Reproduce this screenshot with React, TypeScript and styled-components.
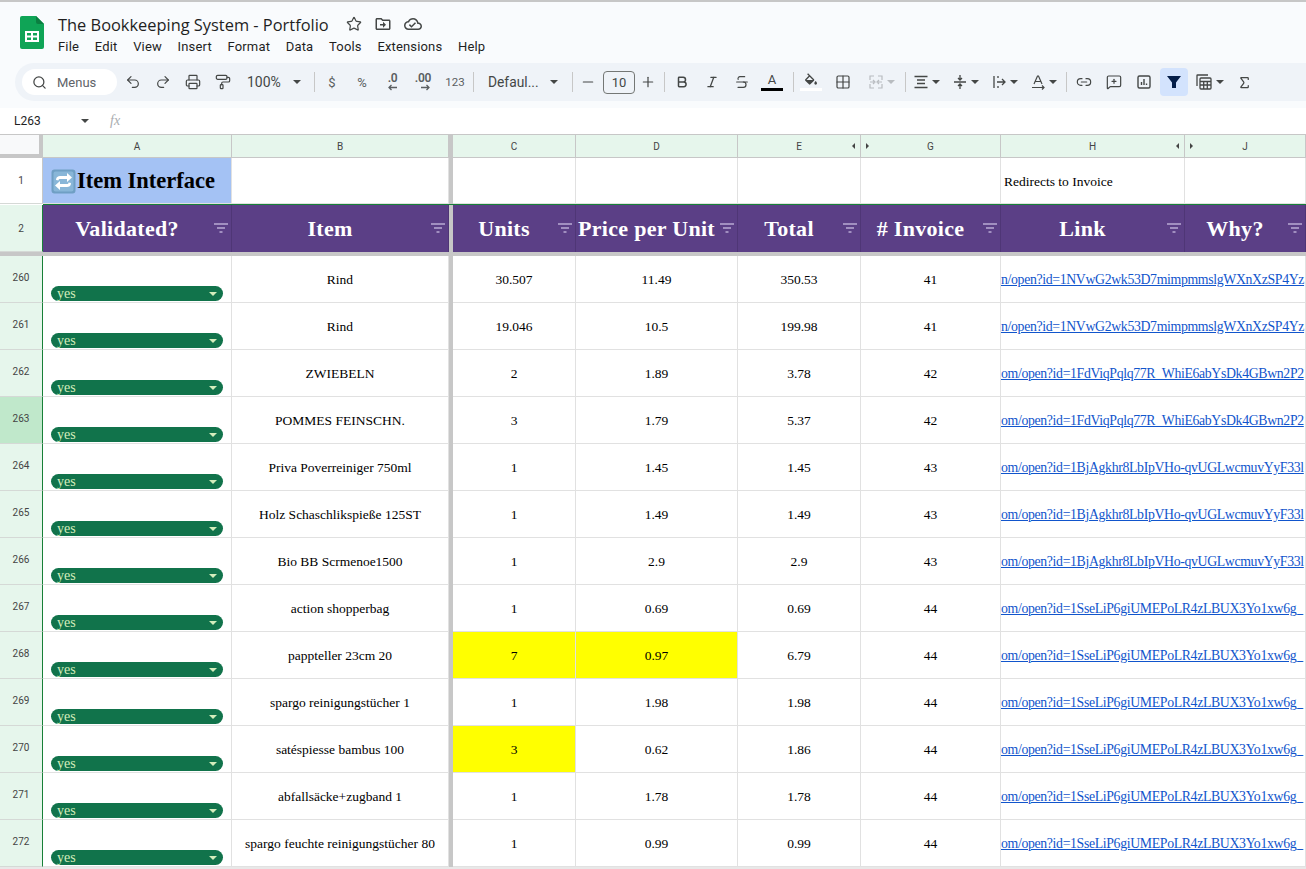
import React, { FunctionComponent, ReactNode } from "react";
import styled, { createGlobalStyle } from "styled-components";
import {
  Search,
  Undo2,
  Redo2,
  Printer,
  PaintRoller,
  Star,
  Minus,
  Plus,
  Bold,
  Italic,
  Strikethrough,
  Grid2x2,
  Link2,
  MessageSquarePlus,
  Sigma,
} from "lucide-react";

type RowData = {
  num: number;
  item: string;
  units: string;
  price: string;
  total: string;
  invoice: string;
  link: string;
  yellowUnits?: boolean;
  yellowPrice?: boolean;
};

const LINK_A = "n/open?id=1NVwG2wk53D7mimpmmslgWXnXzSP4Yz";
const LINK_B = "om/open?id=1FdViqPqlq77R_WhiE6abYsDk4GBwn2P2";
const LINK_C = "om/open?id=1BjAgkhr8LbIpVHo-qvUGLwcmuvYyF33l";
const LINK_D = "om/open?id=1SseLiP6giUMEPoLR4zLBUX3Yo1xw6g_";

const rows: RowData[] = [
  { num: 260, item: "Rind", units: "30.507", price: "11.49", total: "350.53", invoice: "41", link: LINK_A },
  { num: 261, item: "Rind", units: "19.046", price: "10.5", total: "199.98", invoice: "41", link: LINK_A },
  { num: 262, item: "ZWIEBELN", units: "2", price: "1.89", total: "3.78", invoice: "42", link: LINK_B },
  { num: 263, item: "POMMES FEINSCHN.", units: "3", price: "1.79", total: "5.37", invoice: "42", link: LINK_B },
  { num: 264, item: "Priva Poverreiniger 750ml", units: "1", price: "1.45", total: "1.45", invoice: "43", link: LINK_C },
  { num: 265, item: "Holz Schaschlikspieße 125ST", units: "1", price: "1.49", total: "1.49", invoice: "43", link: LINK_C },
  { num: 266, item: "Bio BB Scrmenoe1500", units: "1", price: "2.9", total: "2.9", invoice: "43", link: LINK_C },
  { num: 267, item: "action shopperbag", units: "1", price: "0.69", total: "0.69", invoice: "44", link: LINK_D },
  { num: 268, item: "pappteller 23cm 20", units: "7", price: "0.97", total: "6.79", invoice: "44", link: LINK_D, yellowUnits: true, yellowPrice: true },
  { num: 269, item: "spargo reinigungstücher 1", units: "1", price: "1.98", total: "1.98", invoice: "44", link: LINK_D },
  { num: 270, item: "satéspiesse bambus 100", units: "3", price: "0.62", total: "1.86", invoice: "44", link: LINK_D, yellowUnits: true },
  { num: 271, item: "abfallsäcke+zugband 1", units: "1", price: "1.78", total: "1.78", invoice: "44", link: LINK_D },
  { num: 272, item: "spargo feuchte reinigungstücher 80", units: "1", price: "0.99", total: "0.99", invoice: "44", link: LINK_D },
];

const menus = ["File", "Edit", "View", "Insert", "Format", "Data", "Tools", "Extensions", "Help"];

const GRID = "43px 189px 217px 4px 123px 162px 123px 140px 184px 121px";
const UI_FONT = `Roboto, "Liberation Sans", Arial, sans-serif`;
const CELL_FONT = `"Liberation Serif", "Times New Roman", serif`;

const GlobalStyle = createGlobalStyle`
  html, body {
    margin: 0;
    padding: 0;
    height: 100%;
    overflow: hidden;
    background: #fff;
  }
`;

const Page = styled.div`
  width: 1306px;
  height: 869px;
  overflow: hidden;
  display: flex;
  flex-direction: column;
  font-family: ${UI_FONT};
  border-top: 2px solid #c7c7c7;
  box-sizing: border-box;
`;

const Chrome = styled.header`
  height: 106px;
  flex: none;
  background: #f9fbfd;
  display: flex;
  flex-direction: column;
`;

const TitleArea = styled.div`
  display: flex;
  height: 61px;
  flex: none;
`;

const LogoSlot = styled.div`
  width: 58px;
  flex: none;
  padding: 14px 0 0 20px;
  box-sizing: border-box;
`;

const TitleColumn = styled.div`
  display: flex;
  flex-direction: column;
  padding-top: 11px;
`;

const TitleRow = styled.div`
  display: flex;
  align-items: center;
  height: 22px;
`;

const DocTitle = styled.div`
  font-family: "Open Sans", ${UI_FONT};
  font-size: 16.4px;
  color: #1f1f1f;
  width: 288px;
  white-space: nowrap;
`;

const TitleIcons = styled.div`
  display: flex;
  align-items: center;
  gap: 12px;
  color: #444746;
`;

const MenuBar = styled.nav`
  display: flex;
  margin-top: 3px;
  gap: 15.75px;
`;

const MenuItem = styled.span`
  font-size: 13px;
  letter-spacing: 0.15px;
  line-height: 18px;
  color: #1f1f1f;
`;

const Toolbar = styled.div`
  margin-left: 15px;
  width: 1291px;
  height: 38px;
  background: #eff3f8;
  border-radius: 19px 0 0 19px;
  display: flex;
  align-items: center;
  gap: 2px;
  padding-left: 7px;
  box-sizing: border-box;
  color: #444746;
`;

const SearchPill = styled.div`
  width: 95px;
  height: 26px;
  border-radius: 13px;
  background: #fff;
  display: flex;
  align-items: center;
  gap: 10px;
  padding-left: 10px;
  box-sizing: border-box;
  font-size: 13px;
  color: #5f6368;
`;

const ToolButton = styled.div<{ $w?: number; $active?: boolean }>`
  width: ${(p) => p.$w ?? 28}px;
  height: 28px;
  flex: none;
  border-radius: 4px;
  display: flex;
  align-items: center;
  justify-content: center;
  gap: 3px;
  font-size: 13px;
  background: ${(p) => (p.$active ? "#d3e3fd" : "transparent")};
  color: ${(p) => (p.$active ? "#041e49" : "#444746")};
`;

const TextTool = styled(ToolButton)<{ $size?: number }>`
  font-size: ${(p) => p.$size ?? 13}px;
  color: #5a5e61;
`;

const SelectTool = styled(ToolButton)<{ $pad: number }>`
  justify-content: flex-start;
  padding-left: ${(p) => p.$pad}px;
  box-sizing: border-box;
`;

const ZoomLabel = styled.span`
  font-size: 14px;
  width: 43px;
`;

const FontLabel = styled.span`
  font-size: 13.8px;
  width: 59px;
`;

const Caret = styled.span<{ $muted?: boolean }>`
  width: 0;
  height: 0;
  flex: none;
  border-left: 4px solid transparent;
  border-right: 4px solid transparent;
  border-top: 4px solid ${(p) => (p.$muted ? "#b8bcc0" : "#444746")};
`;

const Sep = styled.span<{ $l?: number; $r?: number }>`
  width: 1px;
  height: 20px;
  flex: none;
  background: #c7c7c7;
  margin: 0 ${(p) => p.$r ?? 1}px 0 ${(p) => p.$l ?? 5}px;
`;

const SizeBox = styled.div`
  width: 32px;
  height: 23px;
  flex: none;
  border: 1px solid #747775;
  border-radius: 4px;
  box-sizing: border-box;
  display: flex;
  align-items: center;
  justify-content: center;
  font-size: 13px;
  color: #444746;
`;

const ColorStack = styled.div`
  display: flex;
  flex-direction: column;
  align-items: center;
  line-height: 14px;
  font-size: 13px;
`;

const ColorBar = styled.span<{ $color: string }>`
  display: block;
  width: 22px;
  height: 3px;
  margin-top: 1px;
  background: ${(p) => p.$color};
`;

const DecimalStack = styled.div`
  display: flex;
  flex-direction: column;
  align-items: flex-end;
  font-size: 12px;
  font-weight: 600;
  line-height: 11px;
  letter-spacing: -0.2px;
  color: #5a5e61;
`;

const FormulaBar = styled.div`
  height: 26px;
  flex: none;
  background: #fff;
  display: flex;
  align-items: center;
  font-size: 12px;
  color: #1f1f1f;
`;

const NameBox = styled.div`
  width: 110px;
  padding-left: 14px;
  box-sizing: border-box;
  display: flex;
  align-items: center;
  justify-content: space-between;
  padding-right: 21px;
`;

const FxLabel = styled.span`
  font-family: ${CELL_FONT};
  font-style: italic;
  font-size: 14px;
  color: #a9acaf;
`;

const Grid = styled.div`
  border-top: 1px solid #c7c7c7;
  flex: 1;
  overflow: hidden;
`;

const SheetRow = styled.div<{ $h: number }>`
  display: grid;
  grid-template-columns: ${GRID};
  height: ${(p) => p.$h}px;
`;

const Corner = styled.div`
  background: #f8f9fa;
  border-right: 4px solid #c7c7c7;
  border-bottom: 4px solid #c7c7c7;
  box-sizing: border-box;
`;

const ColHead = styled.div`
  position: relative;
  background: #e6f6ec;
  border-right: 1px solid #c7c7c7;
  border-bottom: 1px solid #c7c7c7;
  box-sizing: border-box;
  display: flex;
  align-items: center;
  justify-content: center;
  font-size: 10px;
  color: #444;
`;

const RowNum = styled.div<{ $selected?: boolean }>`
  background: ${(p) => (p.$selected ? "#c0e8cb" : "#e6f6ec")};
  border-right: 1px solid #188038;
  border-bottom: 1px solid #d5d9d6;
  box-sizing: border-box;
  display: flex;
  align-items: center;
  justify-content: center;
  padding-bottom: 3px;
  font-size: 10px;
  color: #444;
`;

const FrozenRowNum = styled(RowNum)`
  padding-bottom: 0;
`;

const FirstRowNum = styled(FrozenRowNum)`
  background: #fff;
  border-right-color: #c7c7c7;
`;

const FreezeBar = styled.div`
  background: #c7c7c7;
`;

const Cell = styled.div<{ $yellow?: boolean }>`
  background: ${(p) => (p.$yellow ? "#ffff00" : "#fff")};
  border-right: 1px solid #e1e1e1;
  border-bottom: 1px solid #e1e1e1;
  box-sizing: border-box;
  display: flex;
  align-items: center;
  justify-content: center;
  padding-top: 1px;
  font-family: ${CELL_FONT};
  font-size: 13.5px;
  color: #000;
  white-space: nowrap;
  overflow: hidden;
`;

const NumberCell = styled(Cell)`
  padding-top: 2px;
`;

const TitleCell = styled(Cell)`
  justify-content: flex-start;
  padding-left: 8px;
  gap: 1px;
  background: #a4c2f4;
  font-size: 22.5px;
  font-weight: 700;
`;

const NoteCell = styled(Cell)`
  justify-content: flex-start;
  padding-left: 3px;
  padding-top: 2px;
  font-size: 13.5px;
`;

const HeadCell = styled.div`
  position: relative;
  background: #5b3f86;
  border-right: 1px solid #4f3676;
  box-sizing: border-box;
  display: flex;
  align-items: center;
  justify-content: center;
  padding-right: 20px;
  font-family: ${CELL_FONT};
  font-weight: 700;
  font-size: 22px;
  letter-spacing: 0.3px;
  color: #fff;
  white-space: nowrap;
`;

const FilterMark = styled.svg`
  position: absolute;
  right: 3px;
  top: 18px;
`;

const ChipCell = styled(Cell)`
  align-items: flex-end;
  padding: 0 8px 1px;
`;

const Chip = styled.div`
  width: 172px;
  height: 15px;
  flex: none;
  border-radius: 8px;
  background: #11734b;
  color: #d4edbc;
  display: flex;
  align-items: center;
  justify-content: space-between;
  padding: 0 6px;
  box-sizing: border-box;
  font-size: 14px;
`;

const ChipCaret = styled.span`
  width: 0;
  height: 0;
  border-left: 4px solid transparent;
  border-right: 4px solid transparent;
  border-top: 4px solid #d4edbc;
`;

const LinkCell = styled(Cell)`
  grid-column: span 2;
  justify-content: flex-start;
  padding-top: 2px;
  a {
    color: #1155cc;
    text-decoration: underline;
    font-size: 13.8px;
    letter-spacing: -0.35px;
  }
`;

const HideArrow = styled.span<{ $side: "left" | "right" }>`
  position: absolute;
  top: 8px;
  ${(p) => (p.$side === "left" ? "right: 5px;" : "left: 5px;")}
  width: 0;
  height: 0;
  border-top: 3px solid transparent;
  border-bottom: 3px solid transparent;
  ${(p) =>
    p.$side === "left"
      ? "border-right: 3px solid #444;"
      : "border-left: 3px solid #444;"}
`;

const GreenLine = styled.div`
  height: 1px;
  margin-left: 43px;
  background: #188038;
`;

const FreezeLine = styled.div`
  height: 4px;
  background: #c7c7c7;
`;

const ScrollEdge = styled.div`
  height: 2px;
  background: #e8e8e8;
`;

const SheetsLogo: FunctionComponent = () => (
  <svg width="24" height="33" viewBox="0 0 24 33">
    <path d="M2 0h14l8 8v23a2 2 0 0 1-2 2H2a2 2 0 0 1-2-2V2a2 2 0 0 1 2-2z" fill="#0fa456" />
    <path d="M16 0l8 8h-6a2 2 0 0 1-2-2z" fill="#0b7f41" />
    <path d="M5 15h14v11H5z M7 17v2.5h4V17z M13 17v2.5h4V17z M7 21.5v2.5h4v-2.5z M13 21.5v2.5h4v-2.5z" fill="#fff" fillRule="evenodd" />
  </svg>
);

const FolderMoveIcon: FunctionComponent = () => (
  <svg width="18" height="18" viewBox="0 0 24 24" fill="currentColor">
    <path d="M20 6h-8l-2-2H4c-1.1 0-2 .9-2 2v12c0 1.1.9 2 2 2h16c1.1 0 2-.9 2-2V8c0-1.1-.9-2-2-2zm0 12H4V6h5.17l2 2H20v10zm-8-4H8v-2h4V9l4 4-4 4v-3z" />
  </svg>
);

const CloudDoneIcon: FunctionComponent = () => (
  <svg width="18" height="18" viewBox="0 0 24 24" fill="currentColor">
    <path d="M19.35 10.04C18.67 6.59 15.64 4 12 4 9.11 4 6.6 5.64 5.35 8.04 2.34 8.36 0 10.91 0 14c0 3.31 2.69 6 6 6h13c2.76 0 5-2.24 5-5 0-2.64-2.05-4.78-4.65-4.96zM19 18H6c-2.21 0-4-1.79-4-4 0-2.05 1.53-3.76 3.56-3.97l1.07-.11.5-.95C8.08 7.14 9.94 6 12 6c2.62 0 4.88 1.86 5.39 4.43l.3 1.5 1.53.11c1.56.1 2.78 1.41 2.78 2.96 0 1.65-1.35 3-3 3zm-9-3.82l-2.09-2.09L6.5 13.5 10 17l6.01-6.01-1.41-1.41z" />
  </svg>
);

const RefreshEmoji: FunctionComponent = () => (
  <svg width="25" height="25" viewBox="0 0 25 25">
    <rect x="0.5" y="0.5" width="24" height="24" rx="3" fill="#6f9fc4" />
    <rect x="2.5" y="2.5" width="20" height="20" rx="2" fill="#88b6d8" />
    <path d="M5 11c0-3 2-4 4-4h7V4l5 4.5-5 4.5v-3H9c-1 0-1.5.5-1.5 1.5z" fill="#fff" />
    <path d="M20 14c0 3-2 4-4 4H9v3l-5-4.5L9 12v3h7c1 0 1.5-.5 1.5-1.5z" fill="#fff" />
  </svg>
);

const FilterIcon: FunctionComponent = () => (
  <FilterMark width="14" height="10" viewBox="0 0 14 10">
    <path d="M0 0h14v2H0zM3 4h8v2H3zM5.5 8h3v2h-3z" fill="#a18fc0" />
  </FilterMark>
);

const Funnel: FunctionComponent = () => (
  <svg width="18" height="18" viewBox="0 0 18 18">
    <path d="M2 3h14l-5 6.5V15H7V9.5z" fill="currentColor" />
  </svg>
);

const FillIcon: FunctionComponent = () => (
  <svg width="16" height="14" viewBox="0 0 24 20" fill="currentColor">
    <path d="M16.56 8.94L7.62 0 6.21 1.41l2.38 2.38-5.15 5.15c-.59.59-.59 1.54 0 2.12l5.5 5.5c.29.29.68.44 1.06.44s.77-.15 1.06-.44l5.5-5.5c.59-.58.59-1.53 0-2.12zM5.21 10L10 5.21 14.79 10H5.21z" />
    <path d="M5.21 10h9.58L10 15zM19 11.5s-2 2.17-2 3.5c0 1.1.9 2 2 2s2-.9 2-2c0-1.33-2-3.5-2-3.5z" />
  </svg>
);

const AlignIcon: FunctionComponent = () => (
  <svg width="16" height="16" viewBox="0 0 16 16" fill="none" stroke="currentColor" strokeWidth="1.4">
    <path d="M1.5 2.5h13M4 6h8M4 9.5h8M1.5 13.5h13" />
  </svg>
);

const ChartIcon: FunctionComponent = () => (
  <svg width="16" height="16" viewBox="0 0 16 16" fill="none" stroke="currentColor" strokeWidth="1.4">
    <rect x="2" y="2" width="12" height="12" rx="1.5" />
    <path d="M5.5 11V8M8 11V5M10.5 11V9.5" />
  </svg>
);

const CalcIcon: FunctionComponent = () => (
  <svg width="18" height="18" viewBox="0 0 18 18" fill="none" stroke="currentColor" strokeWidth="1.3">
    <path d="M2 13V2.500A.5.5 0 0 1 2.5 2H13" />
    <rect x="5" y="5" width="11" height="11" rx="1" />
    <path d="M5 8.5h11M5 12h11M8.7 8.5V16M12.3 8.5V16" />
  </svg>
);

const MergeIcon: FunctionComponent = () => (
  <svg width="16" height="16" viewBox="0 0 16 16" fill="none" stroke="#b8bcc0" strokeWidth="1.2">
    <path d="M6 2H2v4M10 2h4v4M6 14H2v-4M10 14h4v-4M2 8h4M10 8h4M5 6l2 2-2 2M11 6l-2 2 2 2" />
  </svg>
);

const ValignIcon: FunctionComponent = () => (
  <svg width="16" height="16" viewBox="0 0 16 16" fill="none" stroke="currentColor" strokeWidth="1.3">
    <path d="M2 8h12M8 1v4.5M6 4l2 2 2-2M8 15v-4.5M6 12l2-2 2 2" />
  </svg>
);

const WrapIcon: FunctionComponent = () => (
  <svg width="16" height="16" viewBox="0 0 16 16" fill="none" stroke="currentColor" strokeWidth="1.3">
    <path d="M3 2v12M6 8h8M11 5l3 3-3 3" />
    <path d="M7 2v2M7 12v2" />
  </svg>
);

const RotateIcon: FunctionComponent = () => (
  <svg width="16" height="16" viewBox="0 0 16 16" fill="none" stroke="currentColor" strokeWidth="1.2">
    <path d="M4 10l3.5-8h1L12 10M5.2 7.5h5.6M2 13.5h12M12 11.5l2 2-2 2" />
  </svg>
);

const DecimalTool: FunctionComponent<{ label: string; dir: "left" | "right"; w?: number }> = ({ label, dir, w }) => (
  <ToolButton $w={w}>
    <DecimalStack>
      {label}
      <svg width="11" height="7" viewBox="0 0 11 7">
        <path
          d={dir === "left" ? "M10 3.5H2M4.5 1L2 3.5 4.5 6" : "M1 3.5h8M6.500 1L9 3.500 6.500 6"}
          stroke="#5a5e61"
          strokeWidth="1.3"
          fill="none"
        />
      </svg>
    </DecimalStack>
  </ToolButton>
);

const IconTool: FunctionComponent<{ children: ReactNode; w?: number; caret?: boolean; muted?: boolean; active?: boolean }> = ({
  children,
  w,
  caret,
  muted,
  active,
}) => (
  <ToolButton $w={w} $active={active}>
    {children}
    {caret && <Caret $muted={muted} />}
  </ToolButton>
);

const ic = { size: 16, strokeWidth: 1.8 };

const App: FunctionComponent = () => {
  return (
    <Page>
      <GlobalStyle />
      <Chrome>
        <TitleArea>
          <LogoSlot>
            <SheetsLogo />
          </LogoSlot>
          <TitleColumn>
            <TitleRow>
              <DocTitle>The Bookkeeping System - Portfolio</DocTitle>
              <TitleIcons>
                <Star size={16} strokeWidth={1.8} />
                <FolderMoveIcon />
                <CloudDoneIcon />
              </TitleIcons>
            </TitleRow>
            <MenuBar>
              {menus.map((m) => (
                <MenuItem key={m}>{m}</MenuItem>
              ))}
            </MenuBar>
          </TitleColumn>
        </TitleArea>
        <Toolbar>
          <SearchPill>
            <Search size={15} strokeWidth={2} color="#444746" />
            Menus
          </SearchPill>
          <IconTool><Undo2 {...ic} /></IconTool>
          <IconTool><Redo2 {...ic} /></IconTool>
          <IconTool><Printer {...ic} /></IconTool>
          <IconTool><PaintRoller {...ic} /></IconTool>
          <SelectTool $w={68} $pad={8}>
            <ZoomLabel>100%</ZoomLabel>
            <Caret />
          </SelectTool>
          <Sep />
          <TextTool>$</TextTool>
          <TextTool>%</TextTool>
          <DecimalTool label=".0" dir="left" />
          <DecimalTool label=".00" dir="right" w={30} />
          <TextTool $w={30} $size={11.5}>123</TextTool>
          <Sep $l={1} $r={1} />
          <SelectTool $w={82} $pad={11}>
            <FontLabel>Defaul...</FontLabel>
            <Caret />
          </SelectTool>
          <Sep $l={11} $r={0} />
          <IconTool w={26}><Minus {...ic} /></IconTool>
          <SizeBox>10</SizeBox>
          <IconTool w={22}><Plus {...ic} /></IconTool>
          <Sep $l={3} $r={1} />
          <IconTool><Bold size={14} strokeWidth={2.6} /></IconTool>
          <IconTool><Italic size={14} strokeWidth={2.2} /></IconTool>
          <IconTool><Strikethrough {...ic} /></IconTool>
          <ToolButton>
            <ColorStack>
              A
              <ColorBar $color="#000" />
            </ColorStack>
          </ToolButton>
          <Sep $l={5} $r={1} />
          <ToolButton>
            <ColorStack>
              <FillIcon />
              <ColorBar $color="#fff" />
            </ColorStack>
          </ToolButton>
          <IconTool w={32}><Grid2x2 {...ic} /></IconTool>
          <IconTool w={40} caret muted><MergeIcon /></IconTool>
          <Sep $l={2} $r={0} />
          <IconTool w={37} caret><AlignIcon /></IconTool>
          <IconTool w={37} caret><ValignIcon /></IconTool>
          <IconTool w={37} caret><WrapIcon /></IconTool>
          <IconTool w={37} caret><RotateIcon /></IconTool>
          <Sep $l={2} $r={1} />
          <IconTool><Link2 {...ic} /></IconTool>
          <IconTool><MessageSquarePlus {...ic} /></IconTool>
          <IconTool><ChartIcon /></IconTool>
          <IconTool active><Funnel /></IconTool>
          <IconTool w={38} caret><CalcIcon /></IconTool>
          <IconTool><Sigma size={15} strokeWidth={2} /></IconTool>
        </Toolbar>
      </Chrome>
      <FormulaBar>
        <NameBox>
          L263
          <Caret />
        </NameBox>
        <FxLabel>fx</FxLabel>
      </FormulaBar>
      <Grid>
        <SheetRow $h={23}>
          <Corner />
          <ColHead>A</ColHead>
          <ColHead>B</ColHead>
          <FreezeBar />
          <ColHead>C</ColHead>
          <ColHead>D</ColHead>
          <ColHead>E<HideArrow $side="left" /></ColHead>
          <ColHead><HideArrow $side="right" />G</ColHead>
          <ColHead>H<HideArrow $side="left" /></ColHead>
          <ColHead><HideArrow $side="right" />J</ColHead>
        </SheetRow>
        <SheetRow $h={46}>
          <FirstRowNum>1</FirstRowNum>
          <TitleCell><RefreshEmoji />Item Interface</TitleCell>
          <Cell />
          <FreezeBar />
          <Cell />
          <Cell />
          <Cell />
          <Cell />
          <NoteCell>Redirects to Invoice</NoteCell>
          <Cell />
        </SheetRow>
        <GreenLine />
        <SheetRow $h={47}>
          <FrozenRowNum>2</FrozenRowNum>
          {["Validated?", "Item"].map((h) => (
            <HeadCell key={h}>{h}<FilterIcon /></HeadCell>
          ))}
          <FreezeBar />
          {["Units", "Price per Unit", "Total", "# Invoice", "Link", "Why?"].map((h) => (
            <HeadCell key={h}>{h}<FilterIcon /></HeadCell>
          ))}
        </SheetRow>
        <FreezeLine />
        {rows.map((r) => (
          <SheetRow $h={47} key={r.num}>
            <RowNum $selected={r.num === 263}>{r.num}</RowNum>
            <ChipCell>
              <Chip>
                yes
                <ChipCaret />
              </Chip>
            </ChipCell>
            <Cell>{r.item}</Cell>
            <FreezeBar />
            <NumberCell $yellow={r.yellowUnits}>{r.units}</NumberCell>
            <NumberCell $yellow={r.yellowPrice}>{r.price}</NumberCell>
            <NumberCell>{r.total}</NumberCell>
            <NumberCell>{r.invoice}</NumberCell>
            <LinkCell><a>{r.link}</a></LinkCell>
          </SheetRow>
        ))}
        <ScrollEdge />
      </Grid>
    </Page>
  );
};

export default App;
